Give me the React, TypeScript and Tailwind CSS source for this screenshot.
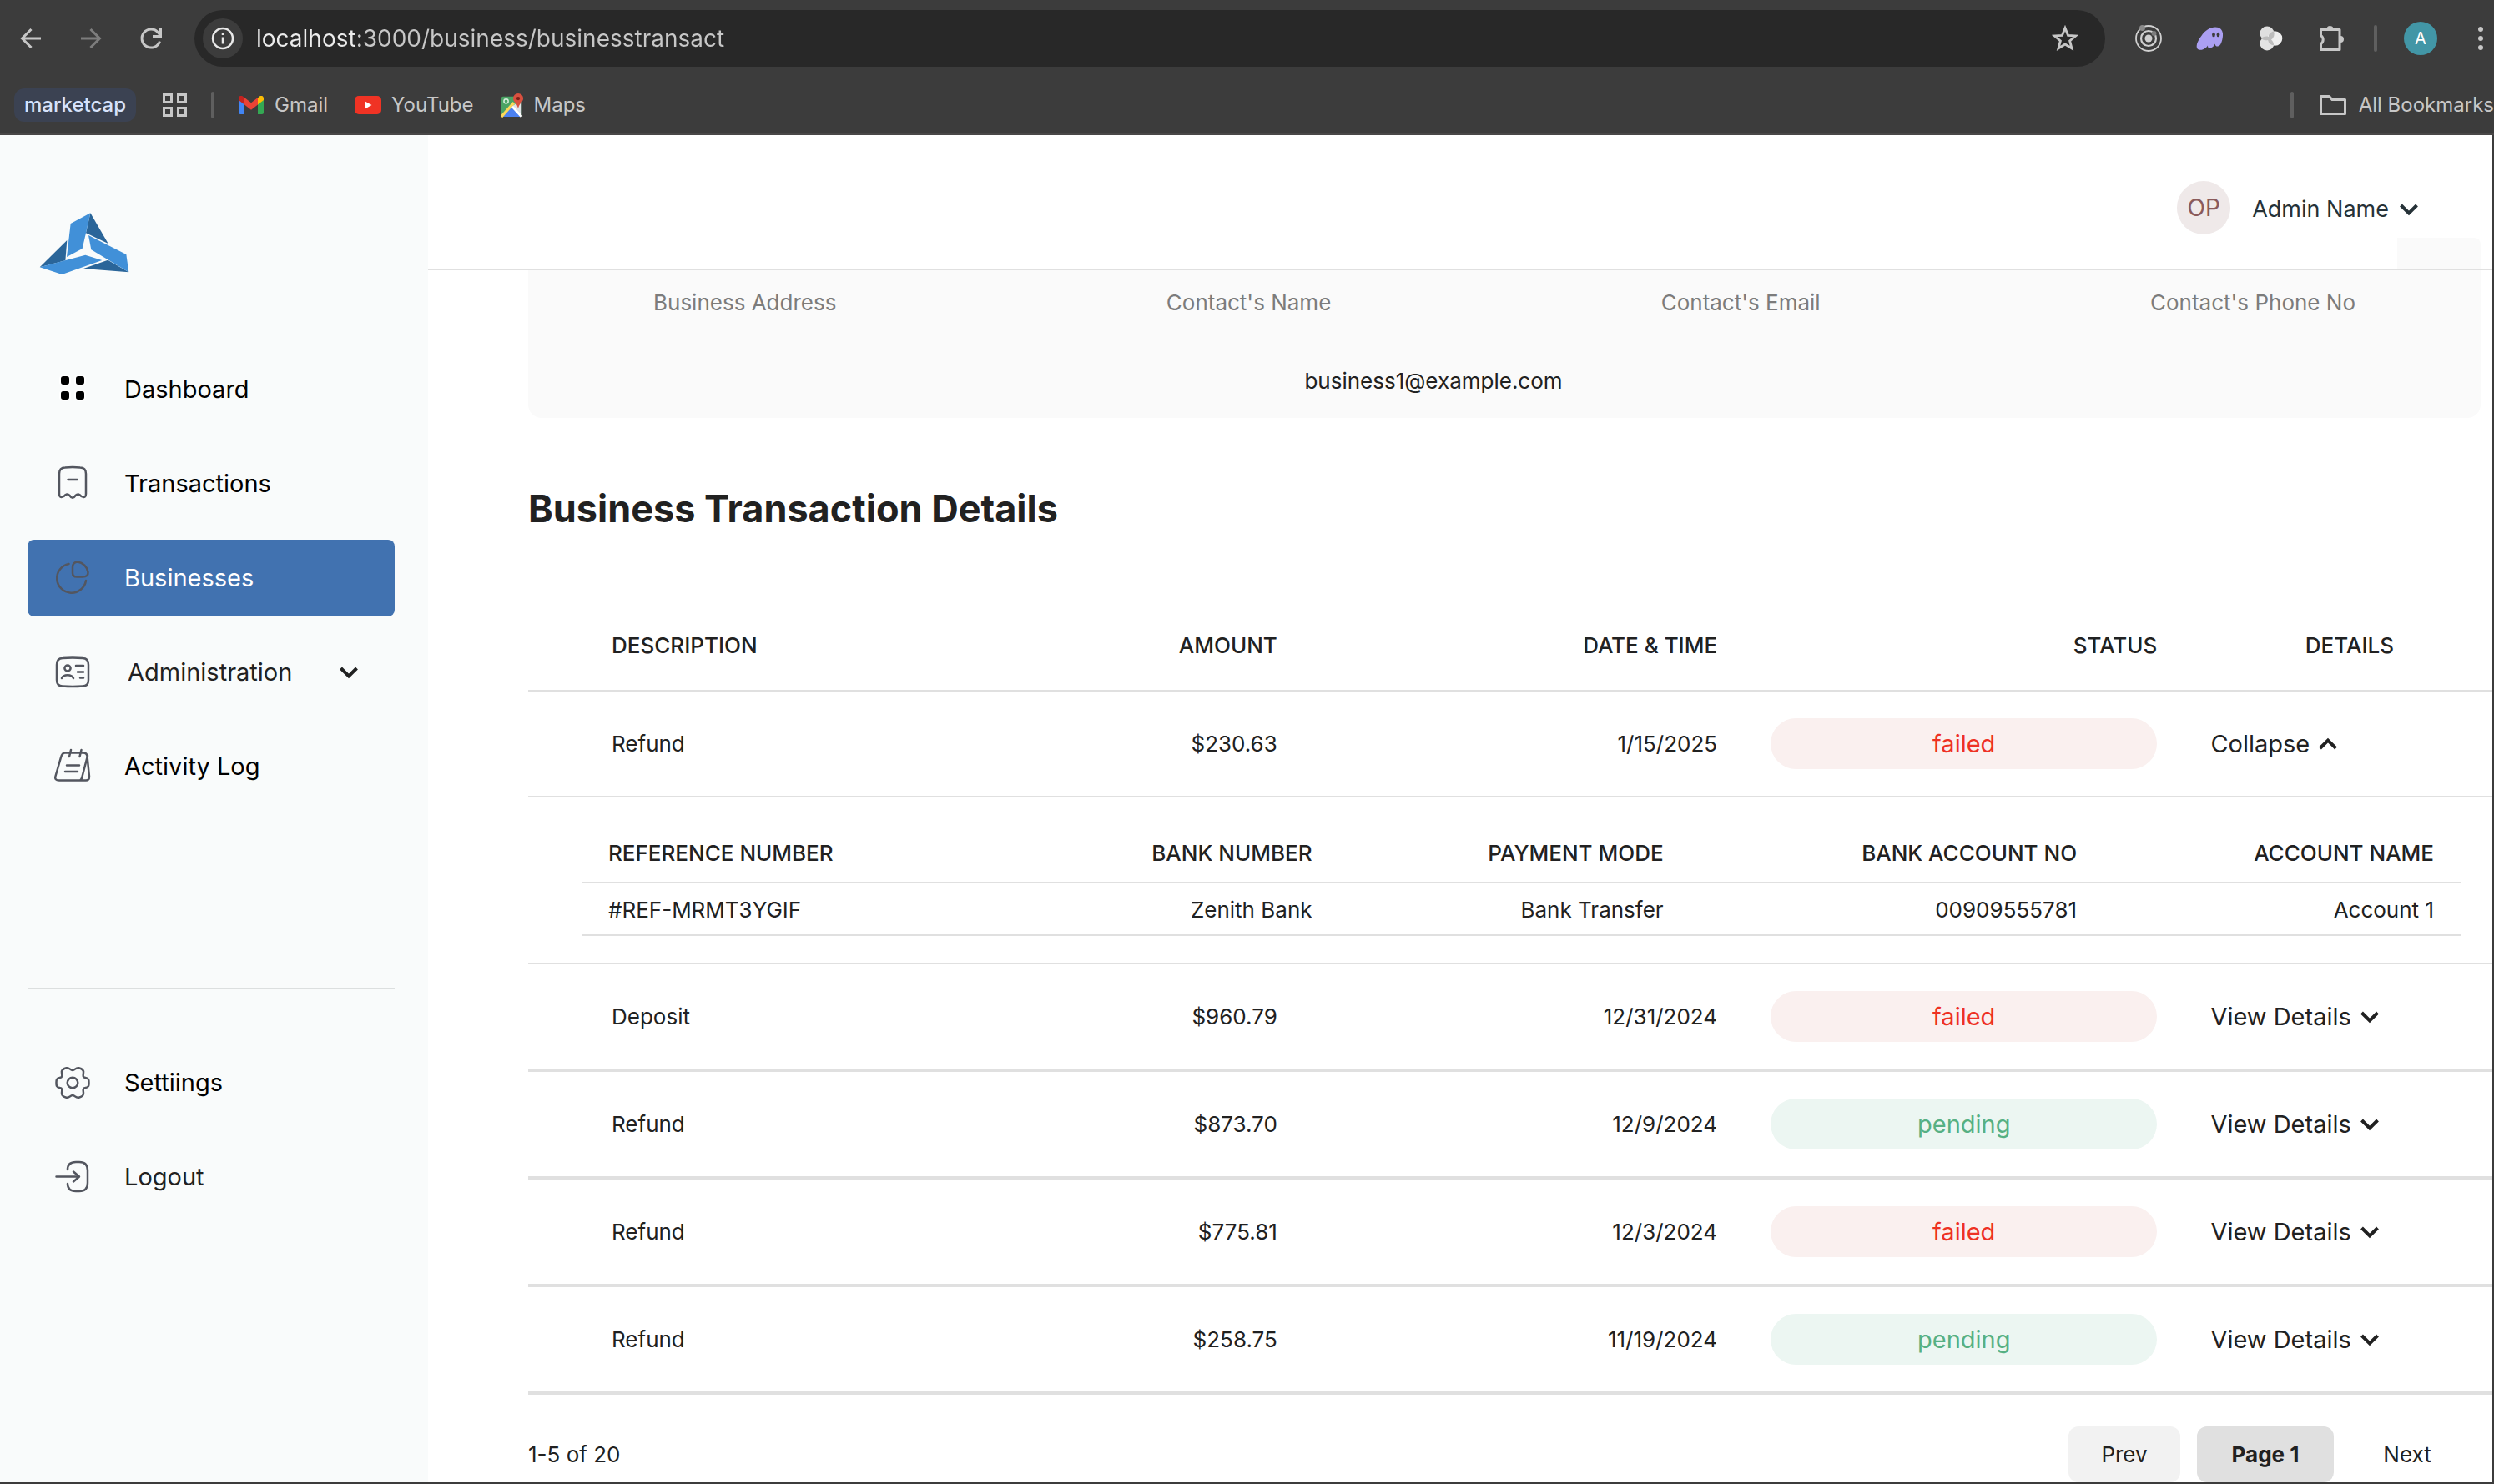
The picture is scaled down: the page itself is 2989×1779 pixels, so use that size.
import React from "react";

const stroke = { fill: "none", strokeLinecap: "round", strokeLinejoin: "round" } as const;

function Chevron({ up = false }: { up?: boolean }) {
  return (
    <svg viewBox="0 0 24 16" className="h-4 w-6 shrink-0" aria-hidden="true">
      <path d={up ? "M2.5 13 L12 3.5 L21.5 13" : "M2.5 3 L12 12.5 L21.5 3"} fill="none" stroke="currentColor" strokeWidth="4" />
    </svg>
  );
}

/* ---------- Browser chrome ---------- */

function NavIcon({ kind }: { kind: "back" | "forward" | "reload" }) {
  return (
    <svg viewBox="0 0 28 28" className="h-7 w-7" fill="none" stroke="currentColor" strokeWidth="3" aria-hidden="true">
      {kind === "back" && <path d="M26 14H4M14.5 3 3.5 14l11 11" />}
      {kind === "forward" && <path d="M2 14h22M13.5 3l11 11-11 11" />}
      {kind === "reload" && <path d="M24.5 17.5A11 11 0 1 1 22.5 7L25 10M25.5 2v9.500h-9.500" />}
    </svg>
  );
}

function GmailIcon() {
  return (
    <svg viewBox="0 0 30 22" className="h-[22px] w-[30px]" aria-hidden="true">
      <path d="M0 4v16a2 2 0 0 0 2 2h5V10z" fill="#4285f4" />
      <path d="M30 4v16a2 2 0 0 1-2 2h-5V10z" fill="#34a853" />
      <path d="M23 2.500V10.500l7-5.500V3c0-3-3.200-4-5.300-2.200z" fill="#fbbc04" />
      <path d="M7 10.500V2l8 6.200L23 2v8.500l-8 6.200z" fill="#ea4335" />
      <path d="M0 3v2l7 5.500V2L5.300.8C3.200-1 0 0 0 3z" fill="#c5221f" />
    </svg>
  );
}

function YouTubeIcon() {
  return (
    <svg viewBox="0 0 32 22" className="h-[22px] w-8" aria-hidden="true">
      <rect width="32" height="22" rx="5" fill="#f03324" />
      <path d="M12.500 6.500v9l8-4.500z" fill="#fff" />
    </svg>
  );
}

function MapsIcon() {
  return (
    <svg viewBox="0 0 30 32" className="h-[30px] w-7" aria-hidden="true">
      <rect x="1" y="5" width="26" height="26" rx="2" fill="#4ba364" />
      <path d="M14 18 27 31V9z" fill="#dfe3e6" />
      <path d="M14 18 3 31h23z" fill="#4a80f0" />
      <path d="M1 31 17 13" stroke="#fbd85a" strokeWidth="3.500" />
      <path d="M15 18 27 31" stroke="#fff" strokeWidth="3" />
      <circle cx="7" cy="11" r="2.800" fill="none" stroke="#d9efdf" strokeWidth="1.600" />
      <path d="M22.500 1a6.500 6.500 0 0 1 6.500 6.500c0 4.500-5 6-6.500 13-1.500-7-6.500-8.500-6.500-13A6.500 6.500 0 0 1 22.500 1z" fill="#d9503f" />
      <circle cx="22.500" cy="7.500" r="2.300" fill="#7b1f17" />
    </svg>
  );
}

function BrowserBar() {
  return (
    <header className="shrink-0 border-b-2 border-[#494747] bg-[#3c3c3c] text-[#c7c7c7]">
      <div className="flex h-[92px] items-center pl-[23px]">
        <div className="flex gap-11">
          <button aria-label="Back"><NavIcon kind="back" /></button>
          <button aria-label="Forward" className="text-[#7d7d7d]"><NavIcon kind="forward" /></button>
          <button aria-label="Reload"><NavIcon kind="reload" /></button>
        </div>
        <div className="ml-[38px] flex h-[68px] flex-1 items-center rounded-full bg-[#282828] pr-8 pl-2.5">
          <button aria-label="Site information" className="flex h-12 w-12 items-center justify-center rounded-full bg-[#3c3c3c]">
            <svg viewBox="0 0 28 28" className="h-7 w-7" fill="none" stroke="#e8e8e8" aria-hidden="true">
              <circle cx="14" cy="14" r="12" strokeWidth="2.500" />
              <path d="M14 12.500v8M14 7.500v2.500" strokeWidth="2.500" />
            </svg>
          </button>
          <input
            aria-label="Address"
            defaultValue="localhost:3000/business/businesstransact"
            className="ml-4 flex-1 bg-[linear-gradient(to_right,#ececec_120px,#c7c7c7_120px)] bg-clip-text text-[28px] leading-9 text-transparent outline-none"
          />
          <button aria-label="Bookmark this page">
            <svg viewBox="0 0 32 32" className="h-8 w-8" aria-hidden="true">
              <path d="M16 3.500l3.500 8.800 9.300.6-7.200 6 2.400 9.100L16 23l-8 5 2.400-9.100-7.200-6 9.300-.6z" fill="none" stroke="currentColor" strokeWidth="2.800" />
            </svg>
          </button>
        </div>
        <div className="ml-9 flex gap-[41px]">
          <button aria-label="Orbit extension">
            <svg viewBox="0 0 32 32" className="h-8 w-8" fill="none" stroke="#d0d0d0" aria-hidden="true">
              <circle cx="16" cy="16" r="15" strokeWidth="1.800" />
              <circle cx="16" cy="16" r="9" strokeWidth="2.200" />
              <circle cx="16" cy="16" r="4.500" fill="#d0d0d0" stroke="none" />
              <circle cx="8.500" cy="3.500" r="3.500" fill="#8a8a8a" stroke="none" />
              <circle cx="22.500" cy="10" r="3" fill="#7d7d7d" stroke="none" />
            </svg>
          </button>
          <button aria-label="Wallet extension">
            <svg viewBox="0 0 32 32" className="h-8 w-8" aria-hidden="true">
              <path d="M3 29.500c-5-2-1-11 3-16C11 6 17 2.500 23 2.500c7 0 9.500 5 9 10.500-.5 6-2.500 12.500-6.500 12.500-2.500 0-2.500-2-3-3-1 2.500-3 5-6 5-2.500 0-2.500-1.500-2.500-3-2 3-6 6.500-11 5z" fill="#ab9ff2" />
              <ellipse cx="21" cy="11.500" rx="1.900" ry="2.700" fill="#3c3c3c" />
              <ellipse cx="26.500" cy="11.500" rx="1.900" ry="2.700" fill="#3c3c3c" />
            </svg>
          </button>
          <button aria-label="Circles extension">
            <svg viewBox="0 0 32 32" className="h-8 w-8" aria-hidden="true">
              <circle cx="12" cy="10" r="8.500" fill="#dfdfdf" />
              <circle cx="12" cy="22" r="8.500" fill="#e4e4e4" />
              <circle cx="21.500" cy="16" r="8.800" fill="#efefef" />
              <path d="M14 12a8.800 8.800 0 0 1 6-4.700 8.500 8.500 0 0 1-3 10.300 8.500 8.500 0 0 1 3 7A8.800 8.800 0 0 1 13 18c-3 .8-6-.2-8-2 3-2.500 6-3 9-2z" fill="#bdbdbd" />
            </svg>
          </button>
          <button aria-label="Extensions">
            <svg viewBox="0 0 32 32" className="h-8 w-8" aria-hidden="true">
              <path d="M4 5.500h22v24H3.500v-7a6 6 0 0 0 0-10V5.500z" fill="none" stroke="currentColor" strokeWidth="3" strokeLinejoin="round" />
              <path d="M10.500 5a4 4 0 0 1 8 0zM27 13a4 4 0 0 1 0 8z" fill="currentColor" />
            </svg>
          </button>
        </div>
        <span className="ml-[35px] h-8 w-1 rounded-full bg-[#5f5f5f]" />
        <button aria-label="Profile" className="ml-8 flex h-10 w-10 items-center justify-center rounded-full bg-[#4296a6] text-xl text-white">A</button>
        <button aria-label="Menu" className="ml-9">
          <svg viewBox="0 0 32 32" className="h-8 w-8" fill="currentColor" aria-hidden="true">
            <circle cx="16" cy="5" r="3" /><circle cx="16" cy="16" r="3" /><circle cx="16" cy="27" r="3" />
          </svg>
        </button>
      </div>
      <nav aria-label="Bookmarks" className="flex h-[68px] items-center pl-[17px] text-2xl">
        <a href="#marketcap" className="flex h-10 items-center rounded-xl bg-[#3b4252] px-3 font-medium text-[#d6e2fb]">marketcap</a>
        <button aria-label="Tab groups" className="ml-8">
          <svg viewBox="0 0 29 28" className="h-7 w-[29px]" fill="none" stroke="currentColor" strokeWidth="3" aria-hidden="true">
            <path d="M1.500 1.500h9v9h-9zM18.500 1.500h9v9h-9zM1.500 17.500h9v9h-9zM18.500 17.500h9v9h-9z" />
          </svg>
        </button>
        <span className="ml-[29px] h-8 w-1 rounded-full bg-[#5f5f5f]" />
        <a href="#gmail" className="ml-[29px] flex items-center gap-[13px]"><GmailIcon />Gmail</a>
        <a href="#youtube" className="ml-8 flex items-center gap-3"><YouTubeIcon />YouTube</a>
        <a href="#maps" className="ml-8 flex items-center gap-3"><MapsIcon />Maps</a>
        <span className="ml-auto h-8 w-1 rounded-full bg-[#5f5f5f]" />
        <a href="#all" className="ml-[30px] flex items-center gap-[14px]">
          <svg viewBox="0 0 34 26" className="h-[26px] w-[34px]" fill="none" stroke="currentColor" strokeWidth="3" strokeLinejoin="round" aria-hidden="true">
            <path d="M2.500 2.500h10l3.500 4h15.500v17h-29z" />
          </svg>
          All Bookmarks
        </a>
      </nav>
    </header>
  );
}

/* ---------- Sidebar ---------- */

function Logo() {
  return (
    <svg viewBox="21 29 324 222" className="h-[74px] w-[108px]" role="img" aria-label="Company logo">
      <path d="M205 30 269 140 189 102z" fill="#2a6599" />
      <path d="M205 30 134 68 120 188 176 158 189 102z" fill="#4190d8" />
      <path d="M121 128 115 201 23 225z" fill="#2a6599" />
      <path d="M23 225 187 181 247 200 103 251z" fill="#4190d8" />
      <path d="M180 230 268 199 343 243z" fill="#2a6599" />
      <path d="M198 110 334 179 343 243 208 162z" fill="#4190d8" />
    </svg>
  );
}

function SideIcon({ name }: { name: string }) {
  return (
    <svg viewBox="0 0 44 44" className="h-11 w-11 shrink-0" stroke="#53565f" strokeWidth="2.500" {...stroke} aria-hidden="true">
      {name === "dashboard" && (
        <g fill="#000" stroke="#fff" strokeWidth="2">
          <rect x="7" y="5" width="12" height="12" rx="4" /><rect x="25" y="5" width="12" height="12" rx="4" />
          <rect x="7" y="23" width="12" height="12" rx="4" /><rect x="25" y="23" width="12" height="12" rx="4" />
        </g>
      )}
      {name === "transactions" && (
        <path d="M6 10Q6 2.500 13 2.500Q22 1.500 31 2.500Q38 2.500 38 10V34Q38 40 32.500 37Q29 32.500 25.500 36Q22 41.500 18.500 36Q15 32.500 11.500 37Q6 40 6 34zM16.500 17h11" />
      )}
      {name === "businesses" && (
        <path d="M17.500 5A17.500 17.500 0 1 0 38 25M22 9Q22 3 28 2.500A15 15 0 0 1 40.500 15Q41 20.500 34 20.500H27Q22 20.500 22 16z" />
      )}
      {name === "administration" && (
        <g>
          <path d="M3 13Q3 5 10 5Q22 4 34 5Q41 5 41 13V31Q41 38.500 34 38.500Q22 39.500 10 38.500Q3 38.500 3 31z" />
          <ellipse cx="16" cy="17" rx="3.600" ry="3.400" />
          <path d="M9 29C11 24 21 24 23 29M26 14h9M28 21.500h7M31 28.500h4" />
        </g>
      )}
      {name === "activity" && (
        <path d="M13 5.500h22q4 0 4.500 4L42 34q0 4.500-4 4.500H6q-6 0-4.500-5L8 11q1.500-5.500 5-5.500zM40 9l-6.500 25q-1 4.500-3 4.500M20 2l-2 8M32.500 2l-2 8M15 20.500h15M13 28h15" />
      )}
      {name === "settings" && (
        <g>
          <circle cx="22" cy="22" r="6.300" />
          <path d="M22 7C19 7 18.500 3.500 14.500 4.300C11.500 5 8.500 6.500 9 10C9.500 13.500 10 15.500 6.500 16C2.500 16.500 2.500 19 2.500 22C2.500 25 2.500 27.500 6.500 28C10 28.500 9.500 30.500 9 34C8.500 37.500 11.500 39 14.500 39.700C18.500 40.500 19 37 22 37C25 37 25.500 40.500 29.500 39.700C32.500 39 35.500 37.500 35 34C34.500 30.500 34 28.500 37.500 28C41.500 27.500 41.500 25 41.500 22C41.500 19 41.500 16.500 37.500 16C34 15.500 34.500 13.500 35 10C35.500 6.500 32.500 5 29.500 4.300C25.500 3.500 25 7 22 7z" />
        </g>
      )}
      {name === "logout" && (
        <path d="M2.500 21.500h27M23 15.500l7 6-7 6M16 13Q16 4 26 4h4Q40 4 40 14v15Q40 39 30 39h-4Q16 39 16 30" />
      )}
    </svg>
  );
}

function SideLink({ icon, label, active = false, muted = false }: { icon: string; label: string; active?: boolean; muted?: boolean }) {
  return (
    <a
      href={"#" + icon}
      aria-current={active ? "page" : undefined}
      className={
        "flex h-[92px] items-center gap-10 rounded-lg pl-8 " +
        (active ? "bg-[#4172b0] text-white" : muted ? "text-[#212121]" : "text-black")
      }
    >
      <SideIcon name={icon} />
      {label}
    </a>
  );
}

function Sidebar() {
  return (
    <aside className="flex w-[513px] shrink-0 flex-col bg-[#f9fbfb] pr-10 pl-[33px] text-[29px]">
      <div className="mt-[93px] pl-[14px]"><Logo /></div>
      <nav aria-label="Main" className="mt-[92px] flex flex-col gap-[21px]">
        <SideLink icon="dashboard" label="Dashboard" />
        <SideLink icon="transactions" label="Transactions" />
        <SideLink icon="businesses" label="Businesses" active />
        <button className="flex h-[92px] items-center pr-[43px] pl-8 text-left text-[#212121]">
          <SideIcon name="administration" />
          <span className="ml-11 flex-1">Administration</span>
          <Chevron />
        </button>
        <SideLink icon="activity" label="Activity Log" />
      </nav>
      <hr className="mt-[219px] border-t-2 border-[#dcdfdf]" />
      <nav aria-label="Account" className="mt-[66px] flex flex-col gap-[21px]">
        <SideLink icon="settings" label="Settiings" />
        <SideLink icon="logout" label="Logout" muted />
      </nav>
    </aside>
  );
}

/* ---------- Content ---------- */

const transactions = [
  { description: "Refund", amount: "$230.63", date: "1/15/2025", status: "failed", open: true },
  { description: "Deposit", amount: "$960.79", date: "12/31/2024", status: "failed", open: false },
  { description: "Refund", amount: "$873.70", date: "12/9/2024", status: "pending", open: false },
  { description: "Refund", amount: "$775.81", date: "12/3/2024", status: "failed", open: false },
  { description: "Refund", amount: "$258.75", date: "11/19/2024", status: "pending", open: false },
];

function Topbar() {
  return (
    <div className="relative flex h-[162px] shrink-0 items-end justify-end border-b-2 border-[#e0e0e0] bg-white pr-[88px] pb-[41px]">
      <div className="absolute right-[14px] bottom-0 h-[37px] w-[100px] rounded-tr-lg bg-[#fafafa]" />
      <div className="flex items-center">
        <span className="flex h-16 w-16 items-center justify-center rounded-full bg-[#efe9e9] text-[28px] text-[#8a5a5a]">OP</span>
        <button className="ml-[26px] flex items-center gap-3 pt-1 text-[27px] text-[#263238]">
          Admin Name
          <Chevron />
        </button>
      </div>
    </div>
  );
}

function BusinessCard() {
  return (
    <section className="mr-[14px] rounded-b-2xl bg-[#fafafa] pt-[19px] pb-6">
      <div className="flex justify-between px-[150px] text-[26px] leading-10 text-[#7c7c7c]">
        <span>Business Address</span>
        <span>Contact's Name</span>
        <span>Contact's Email</span>
        <span>Contact's Phone No</span>
      </div>
      <p className="mt-[54px] pr-[170px] text-center text-[26px] leading-10">business1@example.com</p>
    </section>
  );
}

function ReferenceTable() {
  return (
    <table className="w-full table-fixed text-right text-[26px] leading-[39px]">
      <colgroup>
        <col className="w-[20%]" /><col className="w-[20.3%]" /><col className="w-[18.7%]" /><col className="w-[22%]" /><col className="w-[19%]" />
      </colgroup>
      <thead>
        <tr className="border-b-2 border-[#e0e0e0]">
          <th className="pt-[13px] pb-[15px] pl-8 text-left font-medium">REFERENCE NUMBER</th>
          <th className="pt-[13px] pr-8 pb-[15px] font-medium">BANK NUMBER</th>
          <th className="pt-[13px] pr-8 pb-[15px] font-medium">PAYMENT MODE</th>
          <th className="pt-[13px] pr-8 pb-[15px] font-medium">BANK ACCOUNT NO</th>
          <th className="pt-[13px] pr-8 pb-[15px] font-medium">ACCOUNT NAME</th>
        </tr>
      </thead>
      <tbody>
        <tr className="border-b-2 border-[#e0e0e0]">
          <td className="pt-3 pb-2.5 pl-8 text-left">#REF-MRMT3YGIF</td>
          <td className="pt-3 pr-8 pb-2.5">Zenith Bank</td>
          <td className="pt-3 pr-8 pb-2.5">Bank Transfer</td>
          <td className="pt-3 pr-8 pb-2.5">00909555781</td>
          <td className="pt-3 pr-8 pb-2.5">Account 1</td>
        </tr>
      </tbody>
    </table>
  );
}

function TransactionTable() {
  return (
    <table className="mt-20 w-full table-fixed border-separate border-spacing-0 text-right text-[26px]">
      <colgroup>
        <col className="w-[17.100%]" /><col className="w-[22.400%]" /><col className="w-[22.400%]" /><col className="w-[22.400%]" /><col />
      </colgroup>
      <thead>
        <tr className="h-[110px] [&>th]:border-b-2 [&>th]:border-[#e0e0e0] [&>th]:font-medium">
          <th className="pl-[100px] text-left">DESCRIPTION</th>
          <th className="pr-8">AMOUNT</th>
          <th className="pr-8">DATE &amp; TIME</th>
          <th className="pr-8">STATUS</th>
          <th className="pr-[118px]">DETAILS</th>
        </tr>
      </thead>
      <tbody>
        {transactions.map((t) => (
          <React.Fragment key={t.date}>
            <tr
              className={
                t.open
                  ? "h-[127px] [&>td]:border-b-2 [&>td]:border-[#e0e0e0]"
                  : "h-[129px] [&>td]:border-b-4 [&>td]:border-[#e0e0e0]"
              }
            >
              <td className="pl-[100px] text-left">{t.description}</td>
              <td className="pr-8">{t.amount}</td>
              <td className="pr-8">{t.date}</td>
              <td className="px-8">
                <div
                  className={
                    "flex h-[61px] items-center justify-center rounded-full text-[29px] " +
                    (t.status === "failed" ? "bg-[#faf0ef] text-[#ee3124]" : "bg-[#ecf6f2] text-[#56b083]")
                  }
                >
                  {t.status}
                </div>
              </td>
              <td className="pl-8">
                <button aria-expanded={t.open} className="flex items-center gap-2.5 text-[29px]">
                  {t.open ? "Collapse" : "View Details"}
                  <Chevron up={t.open} />
                </button>
              </td>
            </tr>
            {t.open && (
              <tr>
                <td colSpan={5} className="border-b-2 border-[#e0e0e0] pt-[34px] pr-[38px] pb-8 pl-16">
                  <ReferenceTable />
                </td>
              </tr>
            )}
          </React.Fragment>
        ))}
      </tbody>
    </table>
  );
}

function Pagination() {
  return (
    <div className="mt-[38px] flex h-[67px] items-center text-[26px]">
      <span className="flex-1">1-5 of 20</span>
      <button className="h-full w-[134px] rounded-xl bg-[#f2f2f2]">Prev</button>
      <button aria-current="page" className="ml-5 h-full w-[164px] rounded-xl bg-[#e0e0e0] font-bold">Page 1</button>
      <button className="mr-[34px] ml-5 h-full w-[136px]">Next</button>
    </div>
  );
}

export default function App() {
  return (
    <div className="flex h-screen flex-col overflow-hidden bg-white font-['Inter',sans-serif] text-[#212121]">
      <BrowserBar />
      <div className="flex min-h-0 flex-1 border-r-2 border-b-2 border-[#3c3c3c]">
        <Sidebar />
        <div className="flex min-w-0 flex-1 flex-col">
          <Topbar />
          <main className="min-h-0 flex-1 overflow-hidden pl-[120px]">
            <BusinessCard />
            <h1 className="mt-20 text-[45px] leading-[58px] font-bold">Business Transaction Details</h1>
            <TransactionTable />
            <Pagination />
          </main>
        </div>
      </div>
    </div>
  );
}
